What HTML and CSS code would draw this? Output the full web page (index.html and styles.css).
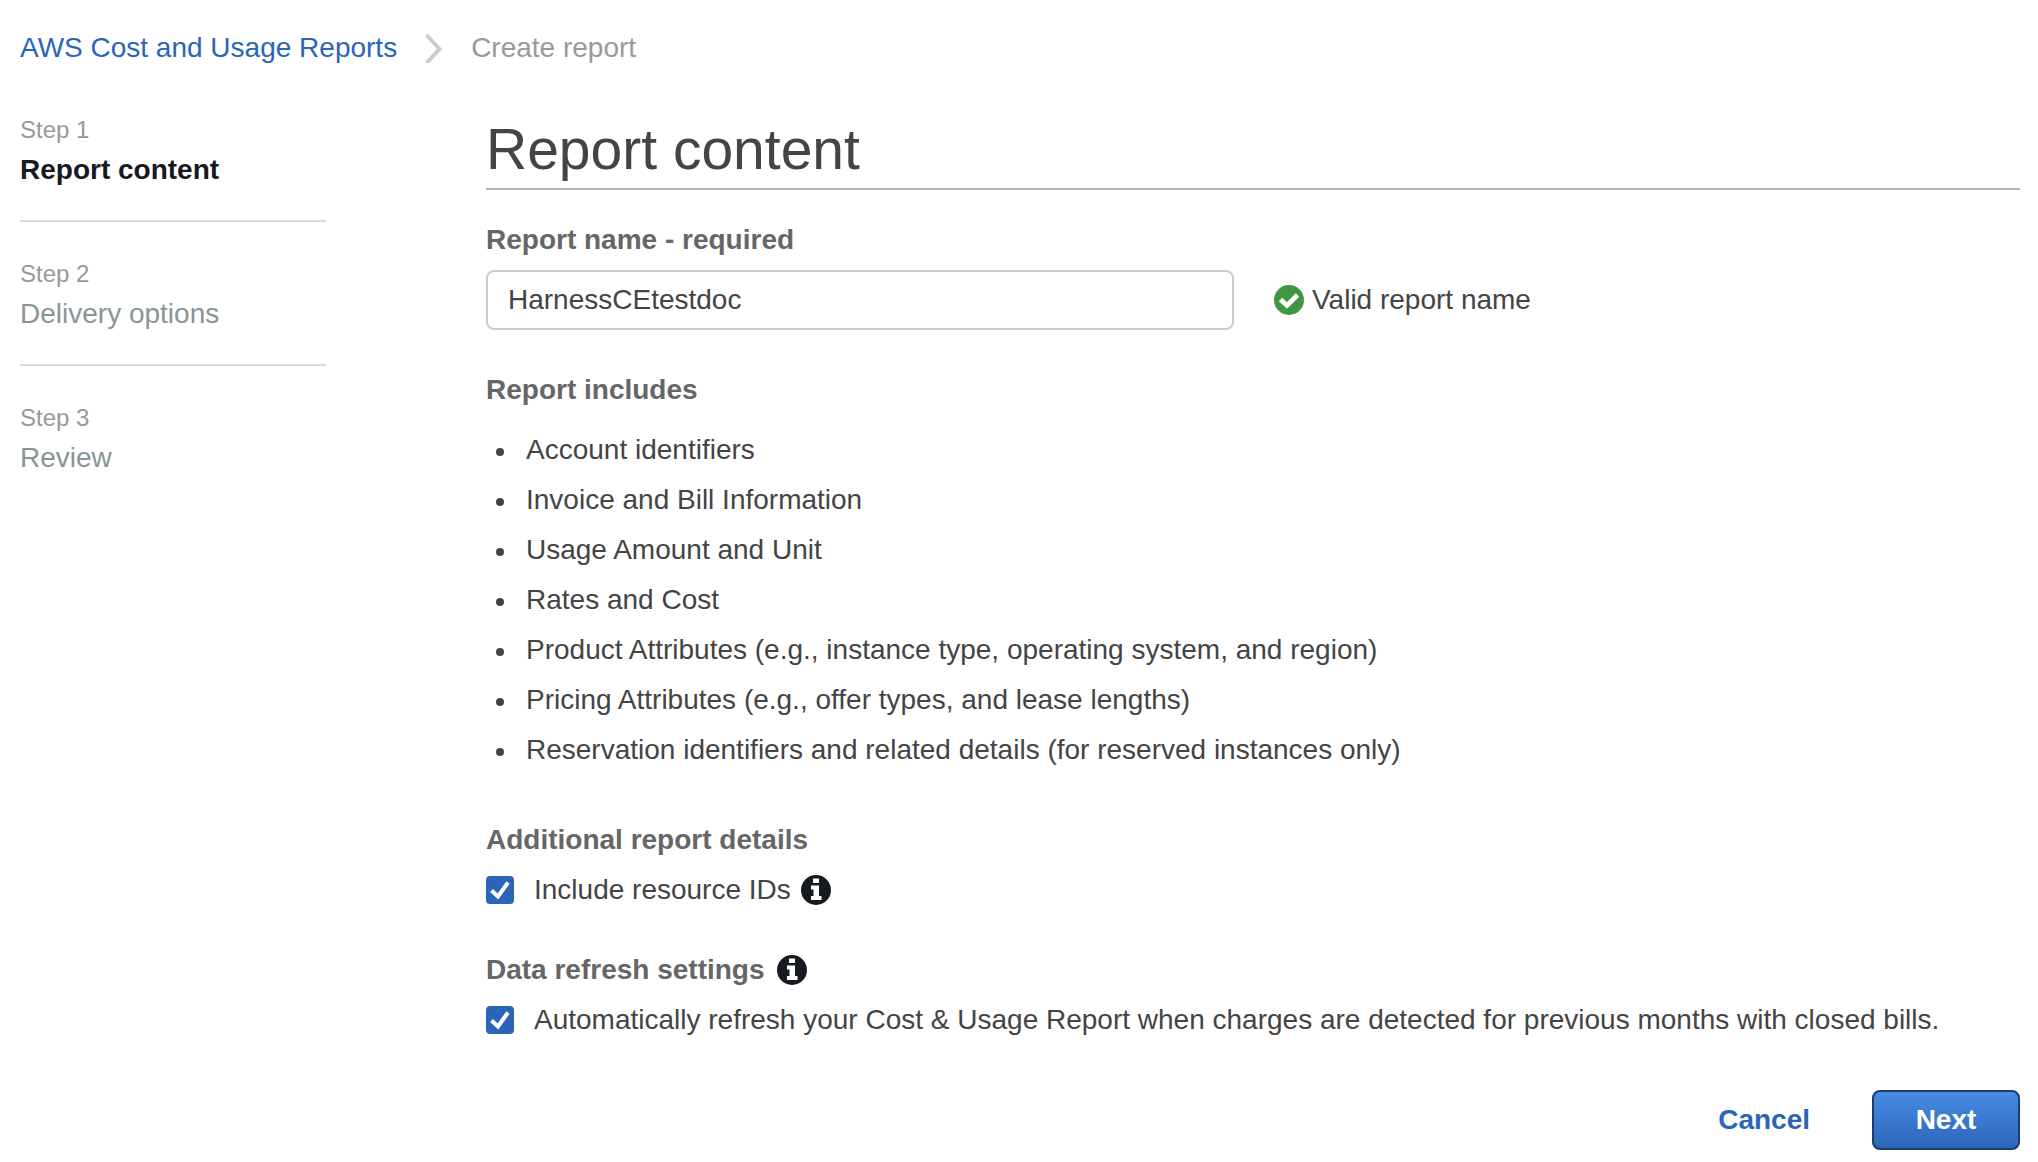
FILE: index.html
```html
<!DOCTYPE html>
<html lang="en">
<head>
    <meta charset="UTF-8">
    <meta name="viewport" content="width=device-width, initial-scale=1.0">
    <title>Create report</title>
    <link rel="stylesheet" href="styles.css">
</head>
<body>
    <!-- Breadcrumb -->
    <nav class="breadcrumb">
        <a href="#">AWS Cost and Usage Reports</a>
        <svg class="chevron" viewBox="0 0 18 30" aria-hidden="true"><path d="M2.5 3 L14.5 16 L2.5 29"/></svg>
        <span>Create report</span>
    </nav>

    <div class="wizard">
        <!-- Steps -->
        <ol class="steps">
            <li class="step active">
                <div class="step-number">Step 1</div>
                <div class="step-name">Report content</div>
            </li>
            <li class="step">
                <div class="step-number">Step 2</div>
                <div class="step-name">Delivery options</div>
            </li>
            <li class="step">
                <div class="step-number">Step 3</div>
                <div class="step-name">Review</div>
            </li>
        </ol>

        <!-- Report form -->
        <form class="report-form">
            <h1>Report content</h1>

            <label class="form-label" for="report-name">Report name - required</label>
            <div class="name-row">
                <input type="text" id="report-name" value="HarnessCEtestdoc">
                <div class="valid-msg">
                    <svg class="icon" viewBox="0 0 30 30" aria-hidden="true">
                        <circle cx="15" cy="15" r="15" fill="#419641"/>
                        <path d="M6.5 14.5 L13 20.5 L23.5 10" fill="none" stroke="#fff" stroke-width="4.8"/>
                    </svg>
                    <span>Valid report name</span>
                </div>
            </div>

            <h2 class="form-label">Report includes</h2>
            <ul class="includes-list">
                <li>Account identifiers</li>
                <li>Invoice and Bill Information</li>
                <li>Usage Amount and Unit</li>
                <li>Rates and Cost</li>
                <li>Product Attributes (e.g., instance type, operating system, and region)</li>
                <li>Pricing Attributes (e.g., offer types, and lease lengths)</li>
                <li>Reservation identifiers and related details (for reserved instances only)</li>
            </ul>

            <h2 class="form-label">Additional report details</h2>
            <div class="check-row">
                <input type="checkbox" id="resource-ids" checked>
                <label for="resource-ids">Include resource IDs</label>
                <svg class="icon" viewBox="0 0 30 30" aria-hidden="true">
                    <circle cx="15" cy="15" r="15" fill="#16191f"/>
                    <path d="M12 3.5 H18 V8 H12 Z M10 10.5 H18 V21 H20.5 V25 H10 V21 H12.5 V14.5 H10 Z" fill="#fff"/>
                </svg>
            </div>

            <h2 class="form-label refresh">
                Data refresh settings
                <svg class="icon" viewBox="0 0 30 30" aria-hidden="true">
                    <circle cx="15" cy="15" r="15" fill="#16191f"/>
                    <path d="M12 3.5 H18 V8 H12 Z M10 10.5 H18 V21 H20.5 V25 H10 V21 H12.5 V14.5 H10 Z" fill="#fff"/>
                </svg>
            </h2>
            <div class="check-row">
                <input type="checkbox" id="auto-refresh" checked>
                <label for="auto-refresh">Automatically refresh your Cost &amp; Usage Report when charges are detected for previous months with closed bills.</label>
            </div>

            <div class="actions">
                <button type="button" class="cancel-btn">Cancel</button>
                <button type="submit" class="next-btn">Next</button>
            </div>
        </form>
    </div>
</body>
</html>
```

FILE: styles.css
```css
* {
    box-sizing: border-box;
}

body {
    margin: 0;
    padding: 28px 18px 12px 20px;
    background-color: #fff;
    color: #444;
    font-family: "Liberation Sans", Arial, sans-serif;
    font-size: 28px;
    line-height: 40px;
}

h1,
h2,
ul,
ol {
    margin: 0;
    padding: 0;
}

.icon {
    width: 30px;
    height: 30px;
    flex-shrink: 0;
}

/* breadcrumb */
.breadcrumb {
    display: flex;
    align-items: center;
    color: #999;
}

.breadcrumb a {
    color: #2b65b8;
    text-decoration: none;
}

.chevron {
    width: 18px;
    height: 30px;
    margin: 0 28px;
    fill: none;
    stroke: #ccc;
    stroke-width: 4;
    stroke-linecap: round;
}

.wizard {
    display: grid;
    grid-template-columns: 306px 1fr;
    column-gap: 160px;
    margin-top: 42px;
}

/* steps */
.steps {
    list-style: none;
}

.step {
    padding-bottom: 30px;
    color: #879596;
}

.step + .step {
    padding-top: 32px;
    border-top: 2px solid #d5dbdb;
}

.step-number {
    color: #999;
    font-size: 24px;
}

.active .step-name {
    color: #16191f;
    font-weight: 700;
}

/* form */
h1 {
    border-bottom: 2px solid #aab7b8;
    font-size: 57px;
    font-weight: 400;
    line-height: 78px;
}

.form-label {
    display: block;
    color: #666;
    font-size: 28px;
    font-weight: 700;
}

.name-row {
    display: flex;
    align-items: center;
    gap: 40px;
    margin: 10px 0 40px;
}

#report-name {
    width: 748px;
    height: 60px;
    padding: 0 20px;
    border: 2px solid #ccc;
    border-radius: 8px;
    color: #444;
    font: inherit;
}

.valid-msg {
    display: flex;
    align-items: center;
    gap: 8px;
}

.report-form > label {
    margin-top: 30px;
}

.includes-list {
    margin: 15px 0 45px;
    padding-left: 10px;
    line-height: 50px;
    list-style: none;
}

.includes-list li {
    display: flex;
    align-items: center;
    gap: 22px;
}

.includes-list li::before {
    content: "";
    width: 8px;
    height: 8px;
    margin-top: 4px;
    border-radius: 50%;
    background-color: #444;
}

.check-row {
    display: flex;
    align-items: center;
    margin-top: 10px;
}

.check-row label {
    margin: 0 10px 0 20px;
}

.check-row input {
    appearance: none;
    flex-shrink: 0;
    width: 28px;
    height: 28px;
    margin: 0;
    border-radius: 4px;
    border: 2px solid #2b65b8;
}

.check-row input:checked {
    background: #2b65b8 url("data:image/svg+xml,%3Csvg xmlns='http://www.w3.org/2000/svg' viewBox='0 0 24 24'%3E%3Cpath d='M3.5 12.5 L10 18.5 L20 4.5' fill='none' stroke='%23fff' stroke-width='4'/%3E%3C/svg%3E") center / 24px no-repeat;
}

.refresh {
    display: flex;
    align-items: center;
    gap: 12px;
    margin-top: 40px;
}

/* buttons */
.actions {
    display: flex;
    justify-content: flex-end;
    gap: 20px;
    margin-top: 50px;
}

.actions button {
    min-width: 148px;
    height: 60px;
    padding: 0 40px;
    border: 2px solid transparent;
    border-radius: 8px;
    background: none;
    color: #2b65b8;
    font: inherit;
    font-weight: 700;
    cursor: pointer;
}

.actions .next-btn {
    border-color: #1a3d6f;
    background: linear-gradient(#488de5, #2b65b8) border-box;
    color: #fff;
}
```
